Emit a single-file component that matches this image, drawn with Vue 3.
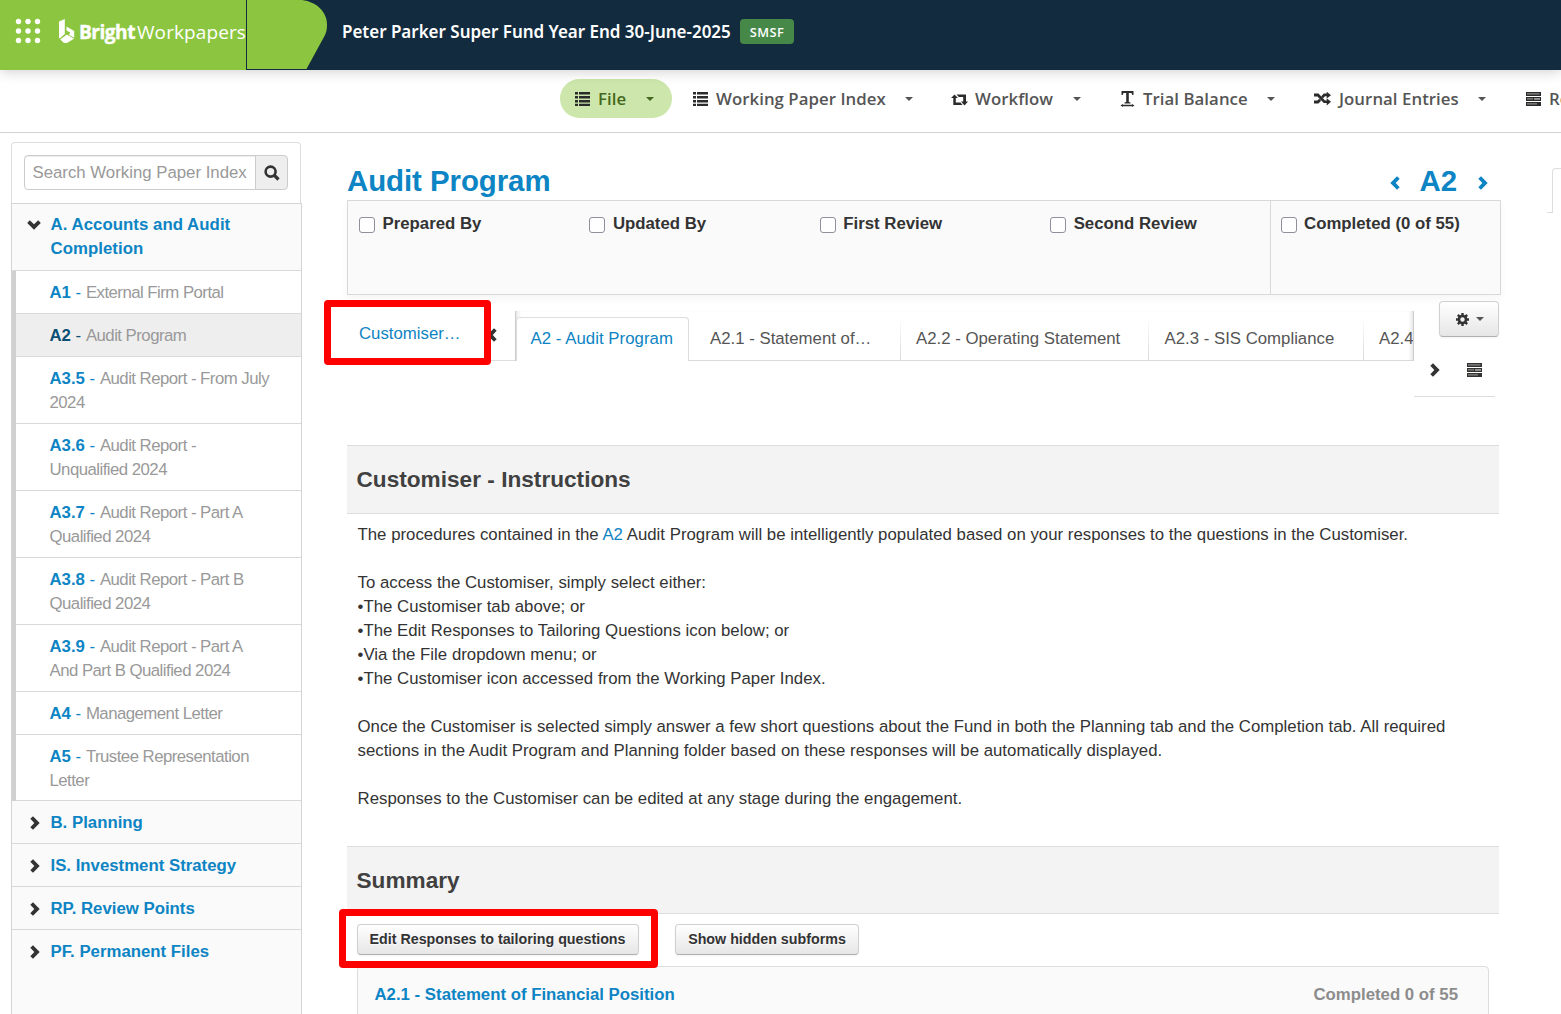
<script setup>
import { ref } from 'vue';

const search = ref('');

const menu = ref([
    { label: 'File', icon: 'list', active: true },
    { label: 'Working Paper Index', icon: 'list' },
    { label: 'Workflow', icon: 'retweet' },
    { label: 'Trial Balance', icon: 'text' },
    { label: 'Journal Entries', icon: 'random' },
    { label: 'Reports', icon: 'tasks' },
]);

const papers = ref([
    { code: 'A1', name: 'External Firm Portal' },
    { code: 'A2', name: 'Audit Program', active: true },
    { code: 'A3.5', name: 'Audit Report - From July 2024' },
    { code: 'A3.6', name: 'Audit Report - Unqualified 2024' },
    { code: 'A3.7', name: 'Audit Report - Part A Qualified 2024' },
    { code: 'A3.8', name: 'Audit Report - Part B Qualified 2024' },
    { code: 'A3.9', name: 'Audit Report - Part A And Part B Qualified 2024' },
    { code: 'A4', name: 'Management Letter' },
    { code: 'A5', name: 'Trustee Representation Letter' },
]);

const folders = ['B. Planning', 'IS. Investment Strategy', 'RP. Review Points', 'PF. Permanent Files'];

const signoffs = ['Prepared By', 'Updated By', 'First Review', 'Second Review', 'Completed (0 of 55)'];

const tabs = [
    { label: 'A2 - Audit Program', active: true },
    { label: 'A2.1 - Statement of…' },
    { label: 'A2.2 - Operating Statement' },
    { label: 'A2.3 - SIS Compliance' },
    { label: 'A2.4' },
];
</script>

<template>
    <div class="page">
        <svg class="sprite" width="0" height="0">
            <symbol id="list" viewBox="0 0 15 14">
                <path d="M0 0h3v2.500H0zM4 0h11v2.500H4zM0 4h3v2.500H0zM4 4h11v2.500H4zM0 8h3v2.500H0zM4 8h11v2.500H4zM0 11.800h3v2.200H0zM4 11.800h11v2.200H4z" />
            </symbol>
            <symbol id="retweet" viewBox="0 0 17 12">
                <path d="M3.500.5L7 4H4.800V8.500H9.500L11.500 11H2.300V4H0zM5.500.5H15V7.500H17L13.500 11.500 10 7.500H12.200V3H7.800z" />
            </symbol>
            <symbol id="text" viewBox="0 0 14 16">
                <path d="M1 0h12v4h-1.200L11 2H8.300v9l1.700.6V12.500H4v-.9l1.700-.6V2H3L2.200 4H1zM2.500 13.800h9v-.8l2.500 1.500-2.500 1.500v-.8h-9v.8L0 14.500l2.500-1.500z" />
            </symbol>
            <symbol id="random" viewBox="0 0 17 14">
                <path d="M0 1.600H4.500L11 8.400H12.700V6.200L17 9.800 12.700 13.400V11.100H9.800L3.400 4.400H0zM0 8.600H3.400L5.200 6.800 7.100 8.700 4.500 11.400H0zM9.800 1.600H12.700V-.3L17 3.200 12.700 6.600V4.300H11L9.100 6.200 7.300 4.300z" />
            </symbol>
            <symbol id="tasks" viewBox="0 0 15 14">
                <path d="M0 0h15v4H0zM0 5h15v4H0zM0 10h15v4H0z" />
                <path fill="#8a8d88" d="M1 1.300h12.500v1.300H1zM1 6.300h6v1.300H1zM1 11.300h10v1.300H1z" />
                <path fill="#c4c6c2" d="M8 6.300h6v1.300H8z" />
            </symbol>
            <symbol id="right" viewBox="0 0 10 14">
                <path d="M.3 2.800L3 .2 9.700 7 3 13.800.3 11.200 4.300 7z" />
            </symbol>
            <symbol id="left" viewBox="0 0 10 14">
                <path d="M9.700 2.800L7 .2.3 7 7 13.800l2.700-2.600L5.700 7z" />
            </symbol>
            <symbol id="down" viewBox="0 0 14 10">
                <path d="M2.800.3L.2 3 7 9.700 13.800 3 11.200.3 7 4.300z" />
            </symbol>
            <symbol id="search" viewBox="0 0 16 16">
                <circle cx="6.600" cy="6.600" r="5" fill="none" stroke="currentColor" stroke-width="2.600" />
                <path d="M10.500 10.500l4 4" stroke="currentColor" stroke-width="3.200" />
            </symbol>
            <symbol id="cog" viewBox="0 0 14 14">
                <circle cx="7" cy="7" r="3.800" fill="none" stroke="currentColor" stroke-width="2.800" />
                <path d="M7 0v2.500M7 11.500V14M0 7h2.500M11.500 7H14M2 2l1.800 1.800M10.200 10.200L12 12M12 2l-1.800 1.800M3.800 10.200L2 12" stroke="currentColor" stroke-width="2.600" />
            </symbol>
        </svg>

        <header class="topbar">
            <div class="brand">
                <svg class="grid-icon" width="26" height="26" viewBox="0 0 26 26">
                    <template v-for="r in 3">
                        <circle v-for="c in 3" :key="`${r}-${c}`" :cx="c * 9.5 - 6" :cy="r * 9.5 - 6" r="2.700" />
                    </template>
                </svg>
                <svg class="logo" width="16" height="24" viewBox="0 0 16 24">
                    <path d="M0 2.500L5.800 0V15L.8 19.500 0 18.800z" />
                    <path d="M7.500 7.500L15.200 12V18.800L10 16 11.200 13.500 7.500 11.500z" />
                    <path d="M1.300 20.400L7.800 15.600l7.200 4.100-7 4.300H5z" />
                </svg>
                <span class="bright">Bright</span>
                <span class="product">Workpapers</span>
            </div>
            <svg class="swoosh" width="82" height="70" viewBox="0 0 82 70">
                <path d="M1 0H56C71 2 81 12 81 25 81 30 80 33 78.500 36L60.500 69H1z" />
            </svg>
            <span class="fund">Peter Parker Super Fund Year End 30-June-2025</span>
            <span class="badge">SMSF</span>
        </header>

        <nav class="menu">
            <a v-for="item in menu" :key="item.label" class="menu-item" :class="{ active: item.active }">
                <svg class="menu-icon" :class="item.icon"><use :href="'#' + item.icon" /></svg>
                <span class="menu-label">{{ item.label }}</span>
                <i class="caret"></i>
            </a>
        </nav>

        <div class="content">
            <aside class="sidebar">
                <div class="search-box">
                    <input v-model="search" type="text" placeholder="Search Working Paper Index">
                    <button><svg width="16" height="16"><use href="#search" /></svg></button>
                </div>
                <div class="tree">
                    <div class="folder open">
                        <svg width="14" height="10"><use href="#down" /></svg>
                        <span>A. Accounts and Audit Completion</span>
                    </div>
                    <div class="papers">
                        <div v-for="paper in papers" :key="paper.code" class="paper" :class="{ active: paper.active }">
                            <a><b>{{ paper.code }}</b> - </a><span>{{ paper.name }}</span>
                        </div>
                    </div>
                    <div v-for="folder in folders" :key="folder" class="folder">
                        <svg width="10" height="14"><use href="#right" /></svg>
                        <span>{{ folder }}</span>
                    </div>
                </div>
            </aside>

            <main class="main">
                <div class="title-row">
                    <h1>Audit Program</h1>
                    <div class="pager">
                        <svg width="10" height="14"><use href="#left" /></svg>
                        <span>A2</span>
                        <svg width="10" height="14"><use href="#right" /></svg>
                    </div>
                </div>

                <div class="signoffs">
                    <label v-for="item in signoffs" :key="item"><i class="check"></i>{{ item }}</label>
                </div>

                <div class="tab-row">
                    <div class="customiser">
                        <a>Customiser…</a>
                        <svg width="10" height="14"><use href="#left" /></svg>
                        <div class="highlight"></div>
                    </div>
                    <div class="tabs">
                        <a v-for="tab in tabs" :key="tab.label" class="tab" :class="{ active: tab.active }">{{ tab.label }}</a>
                    </div>
                    <div class="tools">
                        <button class="btn gear"><svg width="13" height="13"><use href="#cog" /></svg><i class="caret"></i></button>
                        <div class="tool-icons">
                            <svg width="10" height="14"><use href="#right" /></svg>
                            <svg width="15" height="14"><use href="#tasks" /></svg>
                        </div>
                    </div>
                </div>

                <h2>Customiser - Instructions</h2>
                <div class="instructions">
                    <p>The procedures contained in the <a>A2</a> Audit Program will be intelligently populated based on your responses to the questions in the Customiser.</p>
                    <p>
                        To access the Customiser, simply select either:<br>
                        •The Customiser tab above; or<br>
                        •The Edit Responses to Tailoring Questions icon below; or<br>
                        •Via the File dropdown menu; or<br>
                        •The Customiser icon accessed from the Working Paper Index.
                    </p>
                    <p>
                        Once the Customiser is selected simply answer a few short questions about the Fund in both the Planning tab and the Completion tab. All required<br>
                        sections in the Audit Program and Planning folder based on these responses will be automatically displayed.
                    </p>
                    <p>Responses to the Customiser can be edited at any stage during the engagement.</p>
                </div>

                <h2>Summary</h2>
                <div class="actions">
                    <div class="edit">
                        <button class="btn">Edit Responses to tailoring questions</button>
                        <div class="highlight"></div>
                    </div>
                    <button class="btn hidden-forms">Show hidden subforms</button>
                </div>
                <div class="subform">
                    <a>A2.1 - Statement of Financial Position</a>
                    <span>Completed 0 of 55</span>
                </div>
            </main>

            <div class="side-tab">
                <div class="side-foot"></div>
                <div class="side-panel"></div>
            </div>
        </div>
    </div>
</template>

<style>
body {
    margin: 0;
    background: #fff;
    overflow: hidden;
}
</style>

<style scoped>
.page {
    height: 1014px;
    overflow: hidden;
    font-family: "Liberation Sans", Arial, sans-serif;
    font-size: 16.8px;
    line-height: 24px;
    color: #333;
}

.page * {
    box-sizing: border-box;
}

svg {
    display: block;
    flex: none;
    fill: currentColor;
}

.sprite {
    position: absolute;
}

a {
    color: #0d84c3;
}

/* top bar */
.topbar {
    display: flex;
    align-items: center;
    height: 70px;
    background: #122b3e;
    color: #fff;
    box-shadow: 0 2px 12px rgba(0, 0, 0, 0.18);
    position: relative;
    white-space: nowrap;
}

.brand {
    display: flex;
    align-items: center;
    width: 246px;
    height: 70px;
    padding-left: 15px;
    background: #8cc640;
    font-family: "Open Sans", sans-serif;
}

.grid-icon {
    margin-top: -8px;
}

.logo {
    margin: -8px 0 0 18px;
}

.bright {
    width: 58px;
    margin: -7px 0 0 4px;
    font-size: 19.2px;
    font-weight: 700;
    letter-spacing: -0.55px;
    -webkit-text-stroke: 0.4px #fff;
}

.product {
    margin-top: -6px;
    font-size: 19px;
    letter-spacing: 0.1px;
}

.swoosh {
    fill: #8cc640;
}

.fund {
    width: 398px;
    margin: -6px 0 0 14px;
    font-family: "Noto Sans", sans-serif;
    font-size: 17px;
    font-weight: 600;
    letter-spacing: -0.02px;
}

.badge {
    width: 54px;
    height: 25px;
    margin-top: -7px;
    border-radius: 4px;
    background: #468847;
    font: 600 12.8px/27px "Open Sans", sans-serif;
    letter-spacing: 0.4px;
    text-align: center;
}

/* menu */
.menu {
    display: grid;
    grid-template-columns: 118px 258px 169px 194px 212px 180px;
    height: 63px;
    padding: 9px 0 0 560px;
    border-bottom: 1px solid #d2d2d2;
    overflow: hidden;
}

.menu-item {
    display: flex;
    align-items: center;
    height: 39px;
    padding-left: 15px;
    color: #555;
    font-family: "Open Sans", sans-serif;
    font-weight: 600;
    letter-spacing: 0.05px;
    white-space: nowrap;
}

.menu-item.active {
    width: 112px;
    border-radius: 20px;
    background: #cde6ab;
    color: #44681c;
}

.menu-icon {
    width: 15px;
    height: 14px;
    margin: 1px 8px 0 0;
    color: #2b2b2b;
}

.menu-icon.retweet {
    width: 17px;
    height: 12px;
    margin: 2px 7px 0 0;
}

.menu-icon.text {
    height: 16px;
    margin-top: 1px;
}

.menu-icon.random {
    width: 17px;
    margin-right: 8px;
}

.caret {
    flex: none;
    border-top: 4px solid currentColor;
    border-left: 4px solid transparent;
    border-right: 4px solid transparent;
}

.menu-item .caret {
    margin: 0 0 0 19.5px;
}

/* sidebar */
.content {
    display: flex;
    height: 881px;
}

.sidebar {
    flex: none;
    width: 291px;
    margin: 9px 45px 0 11px;
}

.search-box {
    display: flex;
    width: 290px;
    height: 61px;
    padding: 12px;
    border: 1px solid #ddd;
    border-bottom: 0;
    border-radius: 4px 4px 0 0;
}

.search-box input {
    width: 232px;
    height: 35px;
    padding: 0 0 0 7.5px;
    border: 1px solid #ccc;
    border-radius: 4px 0 0 4px;
    box-shadow: inset 0 1px 1px rgba(0, 0, 0, 0.075);
    font: 16.8px "Liberation Sans", sans-serif;
}

.search-box input::placeholder {
    color: #999;
}

.search-box button {
    display: flex;
    align-items: center;
    justify-content: center;
    width: 33px;
    height: 35px;
    margin-left: -1px;
    padding: 0;
    border: 1px solid #ccc;
    border-radius: 0 4px 4px 0;
    background: #eee;
    color: #333;
}

.tree {
    height: 820px;
    width: 291px;
    border: 1px solid #d4d4d4;
    background: #fafafa;
}

.folder {
    display: flex;
    height: 43px;
    padding: 10px 20px 0 18px;
    border-bottom: 1px solid #d9d9d9;
    color: #0d84c3;
    font-weight: bold;
}

.folder:last-child {
    border-bottom: 0;
}

.folder svg {
    margin: 5px 10.5px 0 0;
    color: #333;
}

.folder.open {
    height: 67px;
    padding: 9px 20px 0 15px;
    letter-spacing: 0.05px;
}

.folder.open svg {
    margin: 7px 9.500px 0 0;
}

.papers {
    border-left: 4px solid #d0d0d0;
    background: #fff;
}

.paper {
    padding: 10px 30px 8px 33.5px;
    border-bottom: 1px solid #d9d9d9;
}

.paper:last-child {
    padding-bottom: 7px;
}

.paper span {
    color: #999;
    letter-spacing: -0.53px;
}

.paper.active {
    background: #eee;
}

.paper.active a {
    color: #0b4f75;
}

/* main column */
.main {
    flex: none;
    width: 1154px;
}

h1,
h2,
p {
    margin: 0;
}

.title-row {
    display: flex;
    justify-content: space-between;
    height: 67px;
    padding: 30px 13px 0 0;
    color: #0d84c3;
    font-size: 29.4px;
    font-weight: bold;
    line-height: 36px;
}

h1 {
    font-size: 29.4px;
    line-height: 36px;
    letter-spacing: -0.05px;
}

.pager {
    display: flex;
    align-items: center;
    gap: 20px;
    height: 35px;
}

.pager span {
    margin-left: -1px;
    margin-right: 1px;
}

.pager svg {
    margin-top: 4px;
}

.signoffs {
    display: grid;
    grid-template-columns: repeat(4, 230.4px) 1fr;
    height: 95px;
    border: 1px solid #d9d9d9;
    background: #fafafa;
    box-shadow: 0 4px 8px rgba(0, 0, 0, 0.04);
    font-weight: bold;
}

.signoffs label {
    display: flex;
    padding: 11px 0 0 11px;
}

.signoffs label:last-child {
    padding-left: 10px;
    border-left: 1px solid #d9d9d9;
}

.check {
    width: 16px;
    height: 16px;
    margin: 5px 7.5px 0 0;
    border: 1px solid #8f8f9d;
    border-radius: 3px;
    background: #fff;
}

/* tabs */
.tab-row {
    display: flex;
    height: 150px;
}

.customiser {
    position: relative;
    display: flex;
    width: 168px;
    height: 66px;
    padding: 27px 0 0 12px;
    border-bottom: 1px solid #ddd;
}

.customiser svg {
    margin: 6px 0 0 26px;
    color: #333;
}

.highlight {
    position: absolute;
    border: 7.500px solid #fe0000;
    border-radius: 4px;
}

.customiser .highlight {
    left: -23.5px;
    top: 4.5px;
    width: 167px;
    height: 65.5px;
}

.tabs {
    display: flex;
    width: 899px;
    height: 50px;
    margin-top: 16px;
    padding-top: 6px;
    border-left: 1px solid #ccc;
    border-right: 1px solid #ccc;
    box-shadow: inset 5px 0 5px -4px rgba(0, 0, 0, 0.15), inset -5px 0 5px -4px rgba(0, 0, 0, 0.15);
    overflow: hidden;
    white-space: nowrap;
}

.tab {
    flex: none;
    height: 44px;
    padding: 10px 26.5px 0 15px;
    border-bottom: 1px solid #ddd;
    border-right: 1px solid;
    border-image: linear-gradient(#fff, #d9d9d9) 1;
    color: #555;
}

.tab:nth-child(2) {
    width: 212px;
    padding-left: 21px;
}

.tab:nth-child(3) {
    width: 248px;
}

.tab:nth-child(4) {
    width: 215px;
    padding-left: 15.5px;
}

.tab.active {
    width: 173px;
    padding: 9px 0 0 13.5px;
    border: 1px solid #ddd;
    border-bottom: 0;
    border-image: none;
    border-radius: 4px 4px 0 0;
    background: #fff;
    color: #0d84c3;
    letter-spacing: 0.04px;
}

.tools {
    width: 87px;
    padding-top: 6px;
}

.btn {
    height: 31px;
    padding: 0 1px 2px 0;
    border: 1px solid #d0d0d0;
    border-bottom-color: #b0b0b0;
    border-radius: 4px;
    background: linear-gradient(#fff, #e6e6e6);
    box-shadow: 0 1px 2px rgba(0, 0, 0, 0.05);
    color: #333;
    font: bold 14.28px "Liberation Sans", sans-serif;
    text-shadow: 0 1px 1px rgba(255, 255, 255, 0.75);
}

.gear {
    display: flex;
    align-items: center;
    width: 60px;
    height: 36px;
    margin-left: 25px;
    padding: 0 0 0 16px;
}

.gear .caret {
    margin-left: 7px;
    border-top-color: #555;
}

.tool-icons {
    display: flex;
    gap: 27px;
    width: 81px;
    height: 60px;
    padding: 26px 0 0 16px;
    border-bottom: 1px solid #ddd;
    color: #333;
}

/* sections */
h2 {
    height: 69px;
    padding: 0 9.5px;
    width: 1152px;
    border-top: 1px solid #ddd;
    border-bottom: 1px solid #ddd;
    background: #f3f3f3;
    color: #404040;
    font-size: 22.6px;
    line-height: 67px;
    letter-spacing: 0.02px;
}

.instructions {
    height: 332px;
    padding: 9px 0 0 10.5px;
    letter-spacing: 0.014px;
    white-space: nowrap;
}

.instructions p {
    margin-bottom: 24px;
}

.instructions + h2 {
    height: 68px;
}

.actions {
    display: flex;
    height: 52px;
    padding: 10px 0 0 10px;
}

.edit {
    position: relative;
    width: 318px;
}

.edit .btn {
    width: 282px;
}

.edit .highlight {
    left: -18.500px;
    top: -15.500px;
    width: 319.5px;
    height: 59.5px;
}

.hidden-forms {
    width: 184px;
    padding-right: 0;
}

.subform {
    display: flex;
    justify-content: space-between;
    width: 1132px;
    height: 60px;
    margin-left: 10px;
    padding: 16px 30px 0 16.5px;
    border: 1px solid #ddd;
    border-radius: 4px 4px 0 0;
    background: #fafafa;
    font-weight: bold;
}

.subform span {
    color: #8c8c8c;
}

.side-tab {
    display: flex;
    flex: 1;
    height: 45px;
    margin: 35px 0 0 46px;
}

.side-foot {
    width: 5px;
    border-bottom: 1px solid #ddd;
}

.side-panel {
    flex: 1;
    border-top: 1px solid #ddd;
    border-left: 1px solid #ddd;
    border-radius: 4px 0 0 0;
}
</style>
